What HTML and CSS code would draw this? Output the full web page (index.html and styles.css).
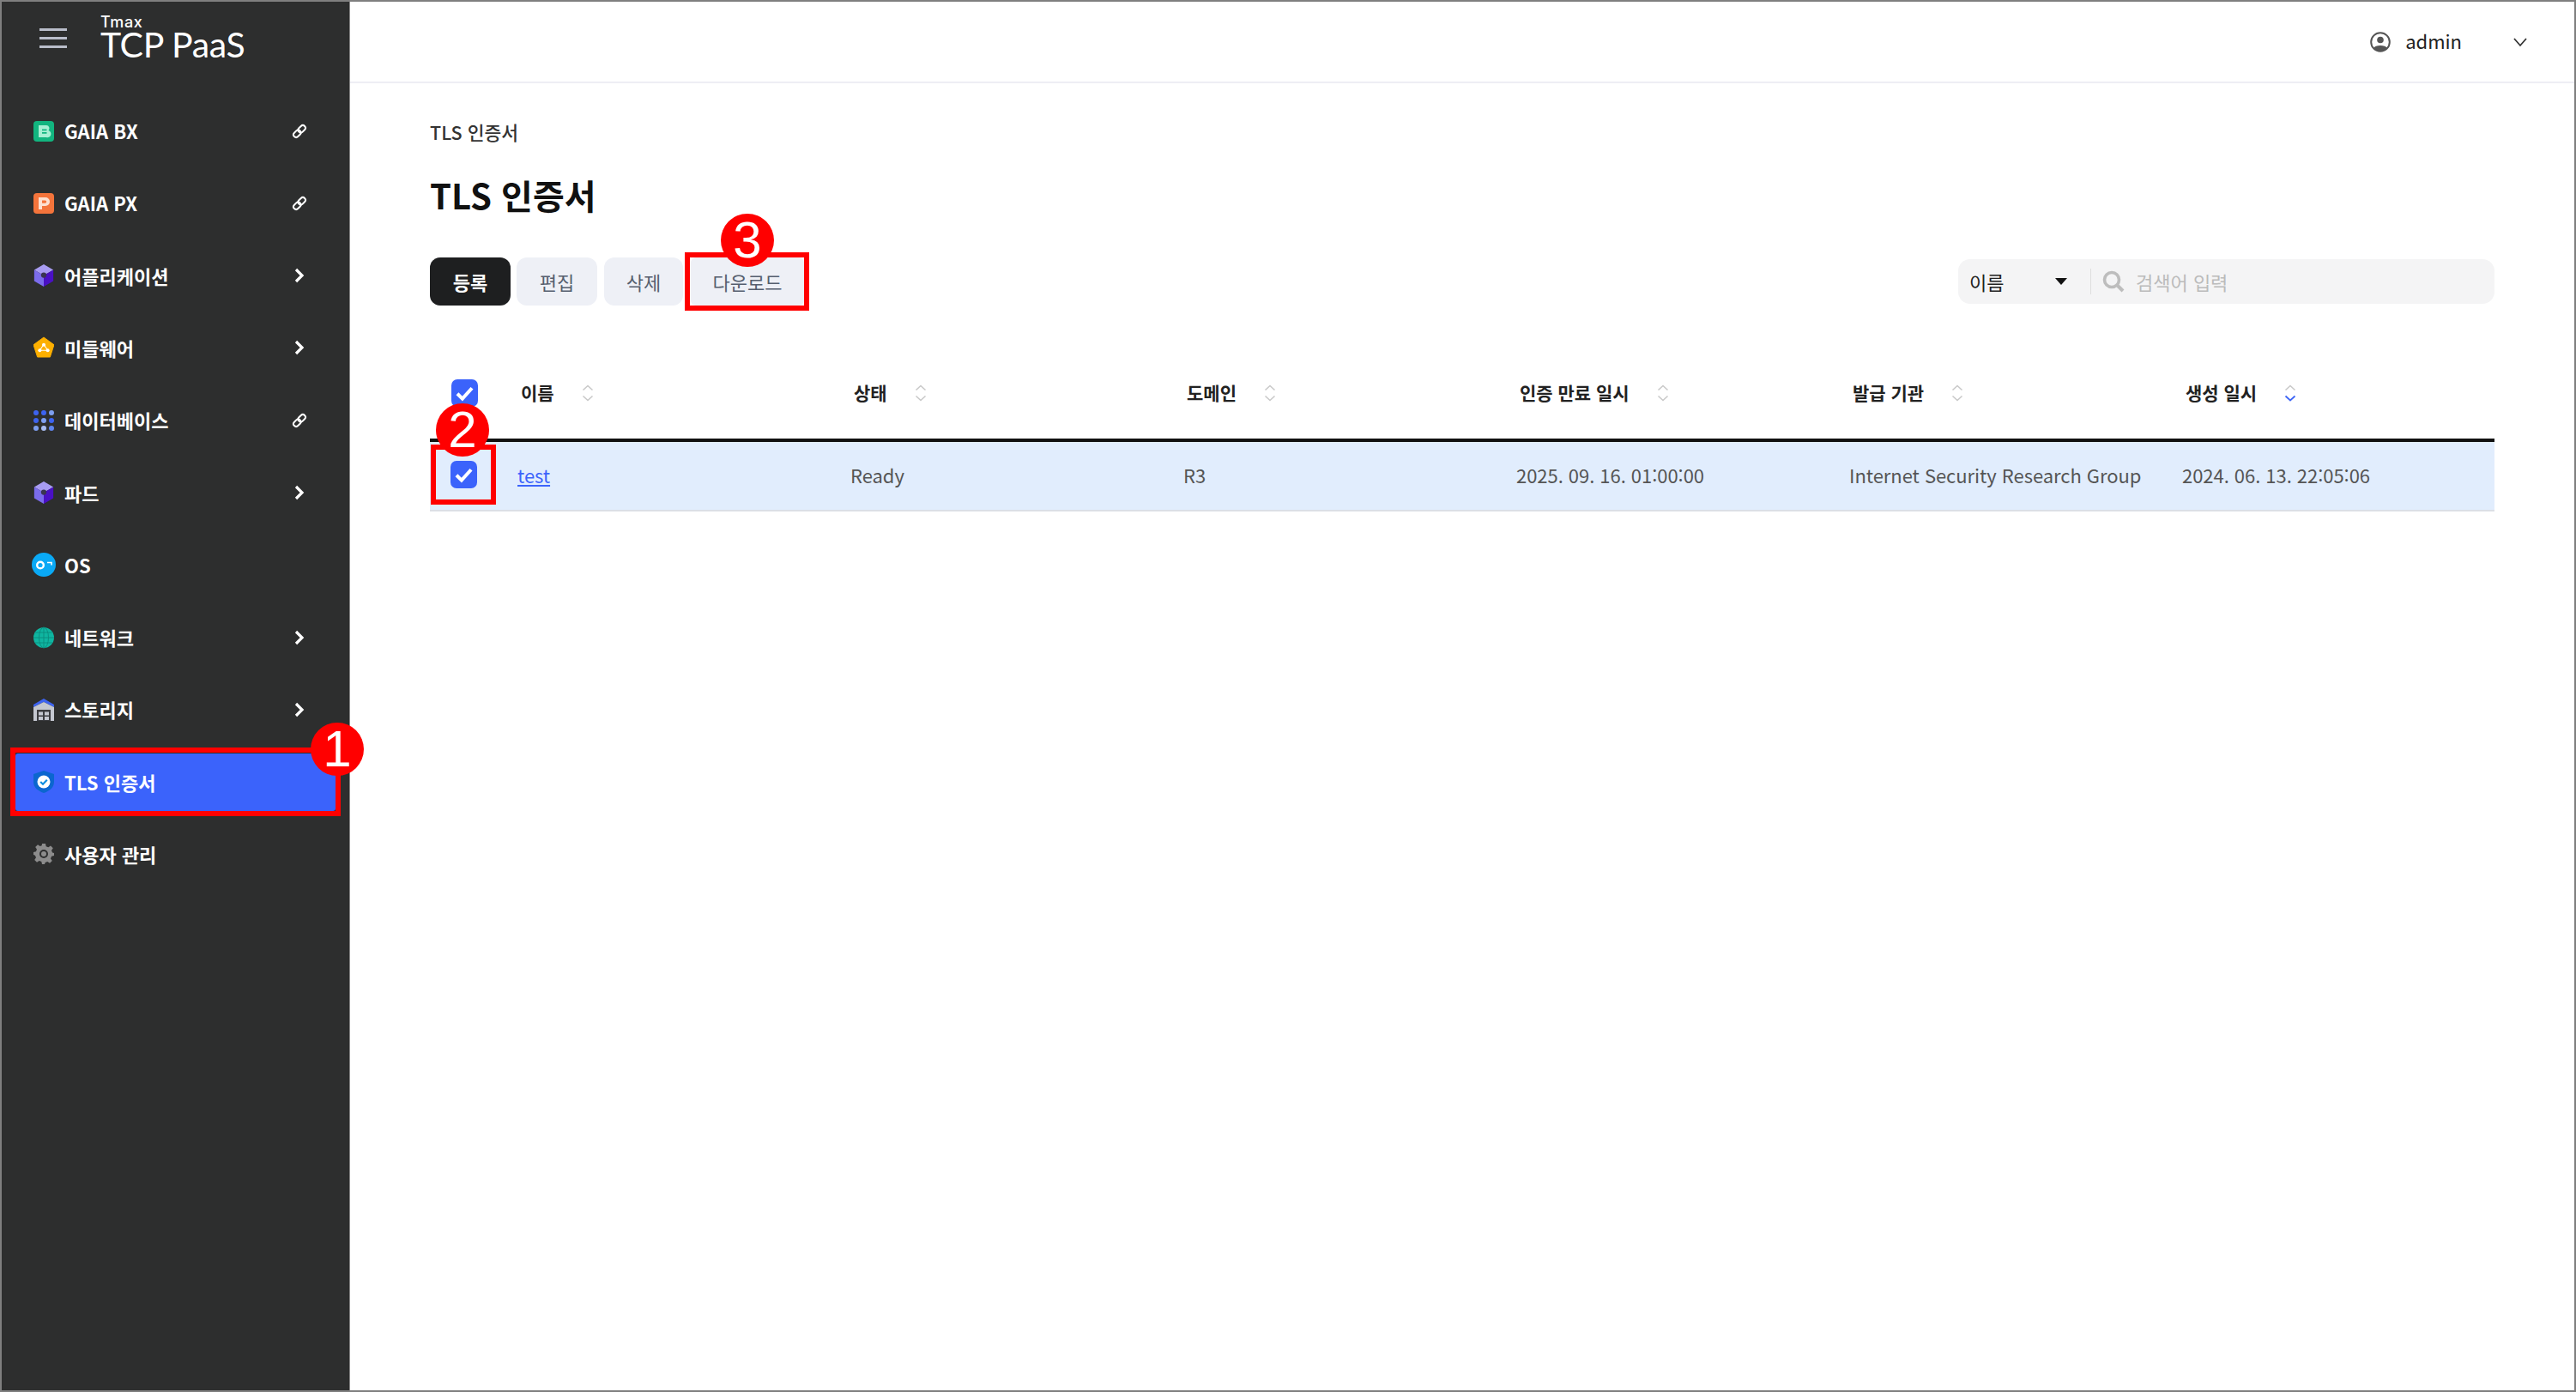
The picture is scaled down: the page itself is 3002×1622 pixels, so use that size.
FILE: index.html
```html
<!DOCTYPE html>
<html lang="ko">

<head>
  <meta charset="utf-8" />
  <title>TLS 인증서</title>
  <meta name="viewport" content="width=device-width, initial-scale=1">
  <link rel="stylesheet" href="styles.css">
</head>

<body>
  <div class="frame">
    <aside class="sidebar">
      <div class="brand">
        <div class="burger"><span></span><span></span><span></span></div>
        <div class="logo">
          <div class="logo-small">Tmax</div>
          <div class="logo-big">TCP PaaS</div>
        </div>
      </div>
      <ul class="menu">
        <li>
          <svg class="icon" viewBox="0 0 24 24"><rect width="24" height="24" rx="4" fill="#12b57f"/><path d="M6 5h9a3.500 3.500 0 0 1 2.500 6 3.800 3.800 0 0 1-2.500 8H6z" fill="#a8f0d4"/><path d="M10 9.500h5.500v1.800H10zM10 13h5.500v1.800H10z" fill="#12b57f"/></svg>
          <span class="label">GAIA BX</span>
          <svg class="link" viewBox="0 0 20 20"><g transform="rotate(45 10 10)" fill="none" stroke="#fff" stroke-width="2.2"><rect x="6.6" y="0.5" width="6.8" height="10.5" rx="3.4"/><rect x="6.6" y="9" width="6.8" height="10.5" rx="3.4"/></g></svg>
        </li>
        <li>
          <svg class="icon" viewBox="0 0 24 24"><rect width="24" height="24" rx="4" fill="#f4743b"/><path d="M6 5h8a5 5 0 0 1 0 10h-4v4H6z" fill="#fde0d0"/><path d="M10 8.5h3.6a1.6 1.6 0 0 1 0 3.2H10z" fill="#f4743b"/></svg>
          <span class="label">GAIA PX</span>
          <svg class="link" viewBox="0 0 20 20"><g transform="rotate(45 10 10)" fill="none" stroke="#fff" stroke-width="2.2"><rect x="6.6" y="0.5" width="6.8" height="10.5" rx="3.4"/><rect x="6.6" y="9" width="6.8" height="10.5" rx="3.4"/></g></svg>
        </li>
        <li>
          <svg class="icon" viewBox="0 0 24 28"><path d="M12 0 24 7 12 14 0 7z" fill="#a89cf2"/><path d="M0 7 12 14V28L0 21z" fill="#7b6cec"/><path d="M24 7 12 14V28L24 21z" fill="#4a10c4"/><circle cx="12" cy="13.5" r="3.4" fill="#3a3550"/></svg>
          <span class="label">어플리케이션</span>
          <svg class="arrow" viewBox="0 0 14 20"><path d="M3 3l7 7-7 7" fill="none" stroke="#fff" stroke-width="3.2"/></svg>
        </li>
        <li>
          <svg class="icon" viewBox="0 0 26 26"><path d="M13 0 26 9.5 21 25H5L0 9.5z" fill="#fdb000" stroke="#fdb000" stroke-linejoin="round"/><path d="M13 9 8 16.5M13 9l5 7.5M8 16.5h10" stroke="#fff" stroke-width="1.2"/><circle cx="13" cy="9.5" r="2.2" fill="#fff"/><circle cx="8" cy="16.5" r="2.2" fill="#fff"/><circle cx="18" cy="16.5" r="2.2" fill="#fff"/></svg>
          <span class="label">미들웨어</span>
          <svg class="arrow" viewBox="0 0 14 20"><path d="M3 3l7 7-7 7" fill="none" stroke="#fff" stroke-width="3.2"/></svg>
        </li>
        <li>
          <svg class="icon" viewBox="0 0 24 24"><circle cx="3" cy="3" r="3" fill="#3d63f0"/><circle cx="12" cy="3" r="3" fill="#3d63f0"/><circle cx="21" cy="3" r="3" fill="#7e9ff0"/><circle cx="3" cy="12" r="3" fill="#3d63f0"/><circle cx="12" cy="12" r="3" fill="#7e9ff0"/><circle cx="21" cy="12" r="3" fill="#3d63f0"/><circle cx="3" cy="21" r="3" fill="#7e9ff0"/><circle cx="12" cy="21" r="3" fill="#a9bdf2"/><circle cx="21" cy="21" r="3" fill="#5f85ef"/></svg>
          <span class="label">데이터베이스</span>
          <svg class="link" viewBox="0 0 20 20"><g transform="rotate(45 10 10)" fill="none" stroke="#fff" stroke-width="2.2"><rect x="6.6" y="0.5" width="6.8" height="10.5" rx="3.4"/><rect x="6.6" y="9" width="6.8" height="10.5" rx="3.4"/></g></svg>
        </li>
        <li>
          <svg class="icon" viewBox="0 0 24 28"><path d="M12 0 24 7 12 14 0 7z" fill="#a89cf2"/><path d="M0 7 12 14V28L0 21z" fill="#7b6cec"/><path d="M24 7 12 14V28L24 21z" fill="#4a10c4"/><circle cx="12" cy="13.5" r="3.4" fill="#3a3550"/></svg>
          <span class="label">파드</span>
          <svg class="arrow" viewBox="0 0 14 20"><path d="M3 3l7 7-7 7" fill="none" stroke="#fff" stroke-width="3.2"/></svg>
        </li>
        <li>
          <svg class="icon icon-wide" viewBox="0 0 28 28"><circle cx="14" cy="14" r="14" fill="#0aa9f5"/><circle cx="10" cy="14.5" r="3.8" fill="none" stroke="#fff" stroke-width="2.4"/><path d="M18 11.5h5v3" fill="none" stroke="#fff" stroke-width="1.6"/></svg>
          <span class="label">OS</span>
        </li>
        <li>
          <svg class="icon" viewBox="0 0 24 24"><circle cx="12" cy="12" r="12" fill="#0fb5a0"/><g fill="none" stroke="#0a8f80" stroke-width="1"><ellipse cx="12" cy="12" rx="5.5" ry="12"/><path d="M12 0v24M0 12h24M2 6h20M2 18h20"/></g></svg>
          <span class="label">네트워크</span>
          <svg class="arrow" viewBox="0 0 14 20"><path d="M3 3l7 7-7 7" fill="none" stroke="#fff" stroke-width="3.2"/></svg>
        </li>
        <li>
          <svg class="icon" viewBox="0 0 24 26"><path d="M12 0 24 7V10L12 4 0 10V7z" fill="#3d63f0"/><path d="M0 10 12 4 24 10V26H0z" fill="#c4c7d0"/><path d="M4 13h16v13H4z" fill="#3a3b3f"/><path d="M6 15.5h5v4H6zM13 15.5h5v4h-5zM6 21h5v4H6zM13 21h5v4h-5z" fill="#c4c7d0"/></svg>
          <span class="label">스토리지</span>
          <svg class="arrow" viewBox="0 0 14 20"><path d="M3 3l7 7-7 7" fill="none" stroke="#fff" stroke-width="3.2"/></svg>
        </li>
        <li class="active">
          <svg class="icon" viewBox="0 0 24 26"><path d="M12 0 24 4V13C24 20 18 24 12 26 6 24 0 20 0 13V4z" fill="#0b66cf"/><circle cx="12" cy="13" r="7.5" fill="#fff"/><path d="M8.2 13l2.8 2.8 4.8-5" fill="none" stroke="#0b8de0" stroke-width="2.2"/></svg>
          <span class="label">TLS 인증서</span>
          <span class="mark-box"><span class="mark-num num-1">1</span></span>
        </li>
        <li>
          <svg class="icon" viewBox="0 0 24 24"><path d="M10 0h4l.7 3.2 2.6 1.1L20 2.5 22.8 5.3l-1.8 2.7 1.1 2.6L24 11v3l-2.9.8-1.1 2.6 1.8 2.7L19 22.8l-2.7-1.8-2.6 1.1L13 24h-3l-.7-2.9-2.6-1.1L4 21.800 1.200 19l1.800-2.700L1.900 13.700 0 13v-3l2.900-.7L4 6.700 2.200 4 5 1.200 7.700 3l2-.8z" fill="#8c8c8c"/><circle cx="12" cy="12" r="5" fill="#2d2e2e"/><circle cx="12" cy="12" r="3" fill="#8c8c8c"/></svg>
          <span class="label">사용자 관리</span>
        </li>
      </ul>
    </aside>

    <div class="content">
      <header class="topbar">
        <svg class="user-icon" viewBox="0 0 24 24"><circle cx="12" cy="12" r="10.800" fill="#fff" stroke="#555" stroke-width="2"/><circle cx="12" cy="9.500" r="3.800" fill="#555"/><path d="M4 19c2-4 14-4 16 0-3 5-13 5-16 0z" fill="#555"/></svg>
        <span class="user-name">admin</span>
        <svg class="user-arrow" viewBox="0 0 18 12"><path d="M2 2l7 8 7-8" fill="none" stroke="#333" stroke-width="1.800"/></svg>
      </header>

      <main class="page">
        <div class="crumb">TLS 인증서</div>
        <h1 class="title">TLS 인증서</h1>

        <div class="toolbar">
          <div class="buttons">
            <button class="btn btn-dark">등록</button>
            <button class="btn">편집</button>
            <button class="btn btn-del">삭제</button>
            <button class="btn btn-down">다운로드
              <span class="mark-box"><span class="mark-num num-3">3</span></span>
            </button>
          </div>
          <div class="search">
            <div class="search-select">
              <span>이름</span>
              <i class="caret"></i>
            </div>
            <svg class="search-icon" viewBox="0 0 26 26"><circle cx="11" cy="11" r="8.500" fill="none" stroke="#bdbdbd" stroke-width="3.600"/><path d="M17 17l7 7" stroke="#bdbdbd" stroke-width="4"/></svg>
            <span class="placeholder">검색어 입력</span>
          </div>
        </div>

        <div class="table">
          <div class="row row-head">
            <div class="cell cell-check"><span class="check"><svg viewBox="0 0 20 20"><path d="M4.500 10.500l3.800 3.800 7.200-8" fill="none" stroke="#fff" stroke-width="2.600"/></svg></span></div>
            <div class="cell">이름<svg class="sort" viewBox="0 0 14 20"><path d="M1.500 6.500 7 1.500l5.500 5M1.500 13.500 7 18.500l5.500-5" fill="none" stroke="#c9c9c9" stroke-width="1.600"/></svg></div>
            <div class="cell">상태<svg class="sort" viewBox="0 0 14 20"><path d="M1.500 6.500 7 1.500l5.500 5M1.500 13.500 7 18.500l5.500-5" fill="none" stroke="#c9c9c9" stroke-width="1.600"/></svg></div>
            <div class="cell">도메인<svg class="sort" viewBox="0 0 14 20"><path d="M1.500 6.500 7 1.500l5.500 5M1.500 13.500 7 18.500l5.500-5" fill="none" stroke="#c9c9c9" stroke-width="1.600"/></svg></div>
            <div class="cell">인증 만료 일시<svg class="sort" viewBox="0 0 14 20"><path d="M1.500 6.500 7 1.500l5.500 5M1.500 13.500 7 18.500l5.500-5" fill="none" stroke="#c9c9c9" stroke-width="1.600"/></svg></div>
            <div class="cell">발급 기관<svg class="sort" viewBox="0 0 14 20"><path d="M1.500 6.500 7 1.500l5.500 5M1.500 13.500 7 18.500l5.500-5" fill="none" stroke="#c9c9c9" stroke-width="1.600"/></svg></div>
            <div class="cell">생성 일시<svg class="sort" viewBox="0 0 14 20"><path d="M1.500 6.500 7 1.500l5.500 5" fill="none" stroke="#c9c9c9" stroke-width="1.600"/><path d="M1.500 13.500 7 18.500l5.500-5" fill="none" stroke="#3f66f5" stroke-width="1.800"/></svg></div>
          </div>
          <div class="row row-body">
            <div class="cell cell-check"><span class="check"><svg viewBox="0 0 20 20"><path d="M4.500 10.500l3.800 3.800 7.200-8" fill="none" stroke="#fff" stroke-width="2.600"/></svg></span></div>
            <div class="cell"><a href="#">test</a></div>
            <div class="cell">Ready</div>
            <div class="cell">R3</div>
            <div class="cell">2025. 09. 16. 01:00:00</div>
            <div class="cell">Internet Security Research Group</div>
            <div class="cell">2024. 06. 13. 22:05:06</div>
            <span class="mark-box mark-check"><span class="mark-num num-2">2</span></span>
          </div>
        </div>
      </main>
    </div>
  </div>
</body>

</html>
```

FILE: styles.css
```css
* {
  margin: 0;
  padding: 0;
  box-sizing: border-box;
}

html, body {
  height: 100%;
}

body {
  background: #fff;
  font: 22px/1.4 "Noto Sans CJK KR", "Noto Sans", sans-serif;
  color: #222;
}

ul {
  list-style: none;
}

button {
  font-family: inherit;
  border: 0;
}

.frame {
  display: flex;
  height: 100%;
  border: 2px solid #7f7f7f;
}

/* sidebar */
.sidebar {
  flex: none;
  width: 406px;
  background: #2d2e2e;
  border-right: 1px solid #8a8a8a;
}
.brand {
  display: flex;
  height: 96px;
  padding: 16px 0 0 44px;
}
.burger {
  display: flex;
  flex-direction: column;
  gap: 7px;
  width: 32px;
  margin-top: 15px;
}
.burger span {
  height: 3px;
  background: #b9bdca;
}
.logo {
  margin-left: 39px;
  color: #fff;
}
.logo-small {
  height: 14px;
  margin-top: 1px;
  font: 500 18px/14px Inter, sans-serif;
  letter-spacing: .6px;
}
.logo-big {
  margin-top: -1px;
  font: 400 41px/40px Lato, sans-serif;
  letter-spacing: -.3px;
}
.menu {
  display: flex;
  flex-direction: column;
  gap: 17.3px;
  margin-top: 21px;
  padding: 0 16px;
}
.menu li {
  position: relative;
  display: flex;
  align-items: center;
  height: 67px;
  padding-left: 21px;
  border-radius: 3px;
}
.menu li.active {
  background: #3b63fb;
}
.icon {
  flex: none;
  width: 24px;
  height: 26px;
}
.icon-wide {
  width: 28px;
  height: 28px;
  margin: 0 -2px;
}
.label {
  margin-left: 12px;
  font-size: 22px;
  font-weight: 700;
  color: #fff;
}
.link, .arrow {
  position: absolute;
  top: 50%;
  transform: translateY(-50%);
}
.link {
  right: 33px;
  width: 18px;
  height: 18px;
}
.arrow {
  right: 35px;
  width: 14px;
  height: 20px;
}

/* top bar */
.content {
  flex: 1;
  min-width: 0;
}
.topbar {
  display: flex;
  align-items: center;
  height: 95px;
  padding-right: 54px;
  justify-content: flex-end;
  border-bottom: 2px solid #eeeef4;
}
.user-icon {
  width: 24px;
  height: 24px;
  margin-right: 17px;
}
.user-name {
  margin-top: -3px;
  font-size: 22px;
  color: #222;
}
.user-arrow {
  width: 18px;
  height: 12px;
  margin-left: 59px;
}

/* page */
.page {
  padding: 0 93px;
}
.crumb {
  margin-top: 42px;
  font-size: 21.5px;
  line-height: 30px;
  font-weight: 500;
  color: #333;
}
.title {
  margin-top: 30px;
  font-size: 40px;
  line-height: 56px;
  font-weight: 700;
  color: #111;
}
.toolbar {
  display: flex;
  justify-content: space-between;
  align-items: center;
  margin-top: 45px;
}
.buttons {
  display: flex;
  gap: 8px;
}
.btn {
  position: relative;
  width: 94px;
  height: 56px;
  border-radius: 12px;
  background: #eef0f6;
  font-size: 22px;
  color: #555e6e;
}
.btn-dark {
  margin-right: -1px;
  background: #1e1f20;
  color: #fff;
  font-weight: 700;
}
.btn-del {
  width: 92px;
}
.btn-down {
  width: 132px;
  margin-left: 1px;
  border-radius: 6px;
}
.search {
  display: flex;
  align-items: center;
  width: 625px;
  height: 52px;
  border-radius: 14px;
  background: #f4f4f5;
}
.search-select {
  display: flex;
  align-items: center;
  justify-content: space-between;
  width: 155px;
  height: 30px;
  padding: 0 27px 0 13px;
  border-right: 1px solid #dedede;
  color: #222;
}
.caret {
  border: 7px solid transparent;
  border-top: 8px solid #111;
  border-bottom: 0;
}
.search-icon {
  width: 26px;
  height: 26px;
  margin-left: 13px;
}
.placeholder {
  margin-left: 13px;
  color: #bbb;
}

/* table */
.table {
  margin-top: 49px;
}
.row {
  position: relative;
  display: grid;
  grid-template-columns: 102px repeat(5, 388px) 1fr;
  align-items: center;
}
.row-head {
  height: 110px;
  border-bottom: 4px solid #111;
  font-weight: 700;
  font-size: 21px;
  color: #222;
}
.row-head .cell {
  display: flex;
  align-items: center;
  padding-left: 4px;
}
.row-head .cell-check {
  padding-left: 25px;
}
.row-body {
  height: 81px;
  padding-bottom: 3px;
  background: #e1edfd;
  border-bottom: 2px solid #dcdfe6;
  letter-spacing: -.05px;
  color: #555;
}
.row-body a {
  color: #3b63fb;
}
.cell-check {
  display: flex;
  padding-left: 24px;
}
.check {
  display: flex;
  width: 31px;
  height: 32px;
  border-radius: 7px;
  background: #3b63fb;
}
.sort {
  width: 14px;
  height: 20px;
  margin-left: 32px;
}

/* red annotations */
.mark-box {
  position: absolute;
  top: -7px;
  right: -6px;
  bottom: -6px;
  left: -6px;
  border: 6px solid #f00;
  z-index: 5;
}
.btn-down .mark-box {
  top: -6px;
  left: -7px;
}
.mark-check {
  top: 3px;
  right: auto;
  bottom: auto;
  left: 1px;
  width: 76px;
  height: 70px;
}
.mark-num {
  position: absolute;
  width: 62px;
  height: 62px;
  border-radius: 50%;
  background: #f00;
  font: 400 60px/62px "Liberation Sans", sans-serif;
  color: #fff;
  text-align: center;
}
.num-1 {
  top: -35px;
  right: -33px;
}
.num-2 {
  top: -54px;
  left: 0;
}
.num-3 {
  top: -51px;
  left: 36px;
}
```
